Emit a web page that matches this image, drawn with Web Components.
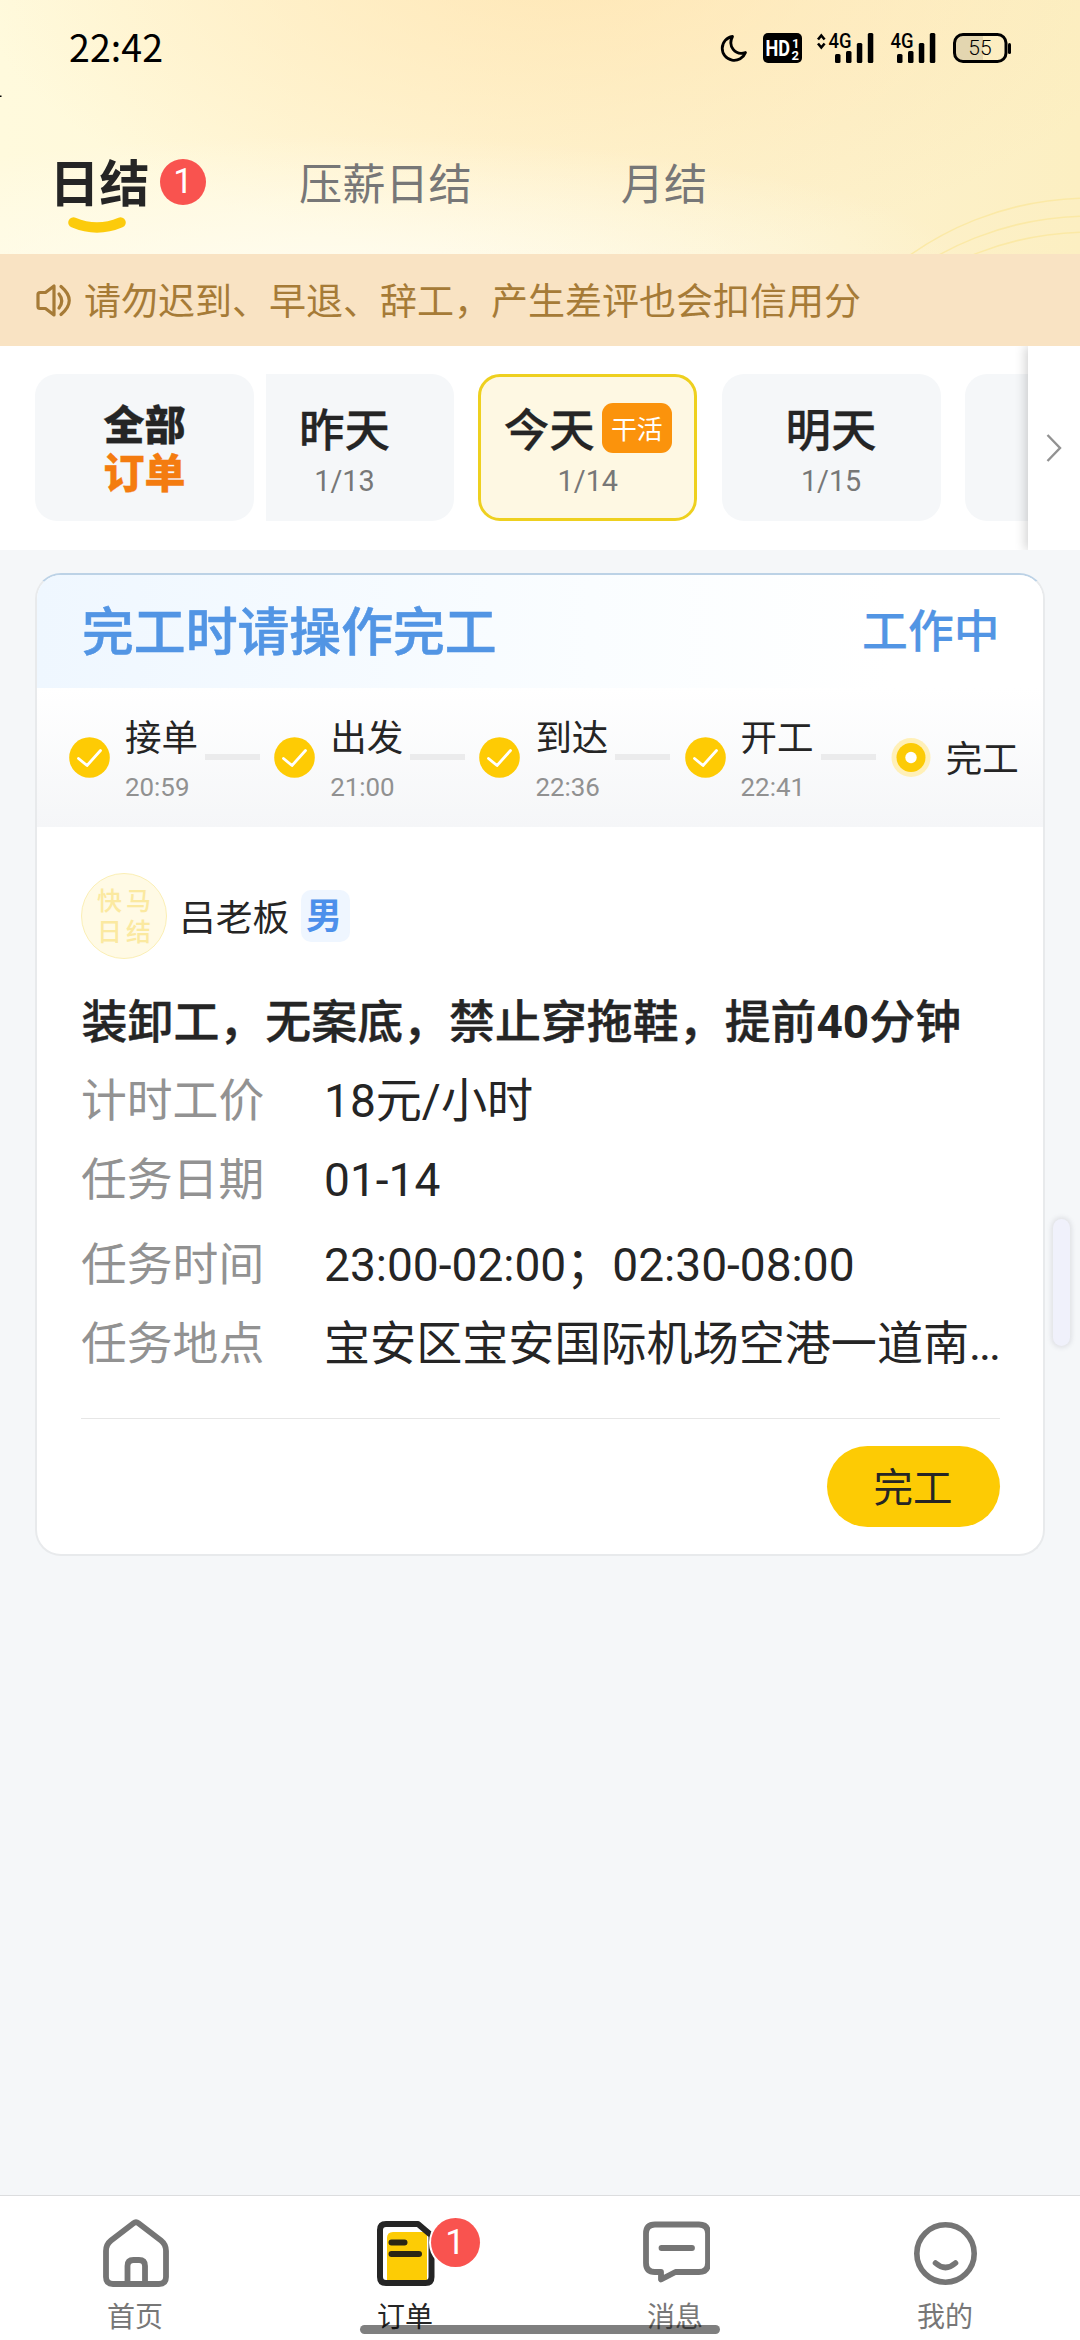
<!DOCTYPE html>
<html lang="zh-CN">
<head>
<meta charset="utf-8">
<title>订单</title>
<style>
html,body{margin:0;padding:0}
body{width:1080px;height:2340px;overflow:hidden;background:#f5f7f9;color:#252525;font-family:Roboto,"Noto Sans CJK SC",sans-serif;-webkit-font-smoothing:antialiased}
</style>
</head>
<body>
<order-page></order-page>
<script>
function define(name, css, html) {
  const t = document.createElement('template');
  t.innerHTML = '<style>*{box-sizing:border-box}:host{box-sizing:border-box}' + css + '</style>' + html;
  customElements.define(name, class extends HTMLElement {
    constructor() {
      super();
      this.attachShadow({ mode: 'open' }).appendChild(t.content.cloneNode(true));
    }
  });
}

define('count-badge', `
:host{display:flex;align-items:center;justify-content:center;width:46px;height:46px;border-radius:50%;background:#f9534f;color:#fff;font-size:35px;line-height:46px;flex:none}
`, `<slot></slot>`);

define('status-bar', `
:host{display:flex;align-items:flex-start;height:96px;padding:24px 68px 0 69px;color:#000}
.time{font:37.5px/44px "Noto Sans CJK SC",sans-serif;letter-spacing:.1px}
.icons{margin-left:auto;display:flex}
svg{display:block;overflow:visible}
text{font-family:Roboto,sans-serif}
`, `<div class="time">22:42</div>
<div class="icons"><svg width="291" height="44" viewBox="721 24 291 44">
<path d="M732.5 36.5A12 12 0 1 0 745.5 52.500C735 56 727.5 46 732.5 36.5Z" fill="none" stroke="#000" stroke-width="2.8" stroke-linejoin="round"/>
<rect x="763" y="33" width="39" height="30" rx="5"/>
<text x="765.5" y="55.500" font-size="22" font-weight="700" fill="#fff" textLength="24.500" lengthAdjust="spacingAndGlyphs">HD</text>
<text x="792" y="47.500" font-size="13" font-weight="700" fill="#fff">1</text>
<text x="791.500" y="59.500" font-size="13" font-weight="700" fill="#fff">2</text>
<path d="M818 39.5L821.3 35.5L824.600 39.5M818 43.500L821.300 47.500L824.600 43.500" fill="none" stroke="#000" stroke-width="2.6"/>
<text x="828.5" y="48" font-size="20" font-weight="500" textLength="23" lengthAdjust="spacingAndGlyphs">4G</text>
<g><rect x="835" y="54" width="5.500" height="9" rx="1.500"/><rect x="846" y="51" width="5.500" height="12" rx="1.500"/><rect x="856.800" y="43" width="5.500" height="20" rx="1.500"/><rect x="867.800" y="33" width="5.500" height="30" rx="1.500"/></g>
<text x="890.5" y="48" font-size="20" font-weight="500" textLength="23" lengthAdjust="spacingAndGlyphs">4G</text>
<g transform="translate(62 0)"><rect x="835" y="54" width="5.500" height="9" rx="1.500"/><rect x="846" y="51" width="5.500" height="12" rx="1.500"/><rect x="856.800" y="43" width="5.500" height="20" rx="1.500"/><rect x="867.800" y="33" width="5.500" height="30" rx="1.500"/></g>
<path d="M962 36H983V60H962A7 7 0 0 1 955 53V43A7 7 0 0 1 962 36Z" fill="#e3d6b0"/>
<rect x="954.500" y="34.500" width="51.500" height="27" rx="8.500" fill="none" stroke="#000" stroke-width="3"/>
<rect x="1008" y="43" width="3" height="11" rx="1.500"/>
<text x="980" y="55.300" font-size="21" font-weight="300" text-anchor="middle">55</text>
</svg></div>`);

define('pay-tab', `
:host{display:flex;flex-direction:column;font-size:43.200px;color:#777;flex:none}
.row{display:flex;align-items:center;height:64px;line-height:64px;white-space:nowrap;padding-top:2px}
svg{display:none;width:60px;height:18px;margin-left:17px}
:host([active]){color:#252525;font-size:50px;font-weight:700}
:host([active]) svg{display:block}
:host([active]) .row{padding-top:0}
::slotted(count-badge){margin:-6px 0 0 10.500px;font-weight:400}
`, `<div class="row"><slot></slot><slot name="badge"></slot></div>
<svg viewBox="0 0 60 18"><path d="M6.500 5.500Q30 15.500 53.500 5.500" fill="none" stroke="#fccb0c" stroke-width="10.500" stroke-linecap="round"/></svg>`);

define('page-header', `
:host{display:block;height:254px;overflow:hidden;background:radial-gradient(ellipse 660px 150px at 330px 285px,rgba(255,253,242,.95),rgba(255,253,242,0)),radial-gradient(ellipse 600px 300px at 570px -40px,rgba(255,228,176,.8),rgba(255,236,200,0)),linear-gradient(90deg,#fffadd 0,#fff6d6 40%,#fdf1cb 78%,#fcefc2 100%)}
.wrap{display:grid}
.wrap>*{grid-area:1/1}
.arcs{display:block}
.tabs{display:flex;align-items:flex-start;padding:57px 0 0 49.500px}
.t2{margin-left:93px}.t3{margin-left:149px}
`, `<div class="wrap"><svg class="arcs" width="1080" height="254" viewBox="0 0 1080 254"><g fill="none" stroke="#fbe9a6" stroke-width="1.500"><circle cx="1090" cy="510" r="312"/><circle cx="1090" cy="528" r="312"/><circle cx="1090" cy="544" r="312"/></g><rect x="0" y="95.500" width="1.500" height="1.500"/></svg>
<div><status-bar></status-bar>
<div class="tabs"><pay-tab active>日结<count-badge slot="badge">1</count-badge></pay-tab><pay-tab class="t2">压薪日结</pay-tab><pay-tab class="t3">月结</pay-tab></div></div></div>`);

define('notice-bar', `
:host{display:flex;align-items:center;height:92px;padding-left:35px;background:#f9e3c3;color:#a67b37;font-size:37px;line-height:92px;white-space:nowrap}
svg{display:block;flex:none;margin-right:11px}
span{margin-top:5px}
`, `<svg width="38" height="36" viewBox="35 282 38 36" fill="none" stroke="#a67b37" stroke-width="3.200" stroke-linecap="round" stroke-linejoin="round"><path d="M54 286V315L45.500 308.500H40Q38 308.500 38 306.500V294.500Q38 292.500 40 292.500H45.500Z"/><path d="M59 294Q64.500 301 59 308M61 286.500Q77.500 300.500 61 314.500"/></svg><span><slot></slot></span>`);

define('day-cell', `
:host{display:flex;flex-direction:column;align-items:center;width:219px;height:147px;border-radius:22px;background:#f5f7f9;flex:none;padding-top:28px}
:host([selected]){background:#fef8e3;border:3px solid #eed01f;padding-top:25px}
.day{display:flex;align-items:center;height:60px;font-size:45.500px;font-weight:500;line-height:60px;white-space:nowrap;-webkit-text-stroke:.3px currentColor}
.date{font-size:28.800px;line-height:36px;color:#777;margin-top:1px}
::slotted([slot=tag]){margin:0 0 8px 7px;width:70px;height:50px;border-radius:11px;background:#fb930c;color:#fff;font-size:25.900px;line-height:54px;text-align:center;font-weight:400;-webkit-text-stroke:0}
`, `<div class="day"><slot></slot><slot name="tag"></slot></div><div class="date"><slot name="date"></slot></div>`);

define('all-orders', `
:host{display:flex;flex-direction:column;align-items:center;justify-content:center;width:219px;height:147px;border-radius:22px;background:#f5f7f9;flex:none;font-size:41px;font-weight:900;line-height:48px;color:#252525;padding-top:5px;-webkit-text-stroke:.3px currentColor}
.o{color:#f47c10;-webkit-text-stroke-color:#f47c10}
`, `<div>全部</div><div class="o">订单</div>`);

define('date-strip', `
:host{display:flex;height:204px;background:#fff;padding:28px 0 0 35px}
.days{margin-left:12px;width:762px;height:147px;overflow:hidden;display:flex;justify-content:flex-start;gap:24.300px}
.days>:first-child{margin-left:-31px}
.next{display:flex;align-items:center;justify-content:center;margin-top:-28px;width:52px;height:204px;background:#fff;box-shadow:-3px 0 10px rgba(0,0,0,.17);clip-path:inset(0 0 0 -20px)}
`, `<all-orders></all-orders>
<div class="days">
<day-cell>昨天<span slot="date">1/13</span></day-cell>
<day-cell selected>今天<span slot="tag">干活</span><span slot="date">1/14</span></day-cell>
<day-cell>明天<span slot="date">1/15</span></day-cell>
<day-cell></day-cell>
</div>
<div class="next"><svg width="20" height="32" viewBox="0 0 20 32"><path d="M3.500 3L16 16L3.500 29" fill="none" stroke="#929292" stroke-width="2.400"/></svg></div>`);

define('step-item', `
:host{display:flex;align-items:center;width:205.200px;height:139px;flex:none}
svg{display:block;flex:none}
.now{display:none}
:host([current]) .now{display:block}
:host([current]) .done{display:none}
.text{display:flex;flex-direction:column;justify-content:center;width:80px;margin-left:15px;padding-top:11px;white-space:nowrap}
.label{font-size:36.500px;line-height:48px}
.time{font-size:25.900px;line-height:48px;color:#919191}
.line{width:55px;height:6px;background:#ebebec;margin-bottom:1px}
:host([current]) .line,:host([current]) .time{display:none}
:host([current]) .text{padding-top:4px}
`, `<svg class="done" width="41" height="41" viewBox="0 0 41 41"><circle cx="20.500" cy="20.500" r="20.300" fill="#fecb04"/><path d="M9.500 21.500L18 28.500L31.500 13.500" fill="none" stroke="#fff" stroke-width="2.800" stroke-linecap="round" stroke-linejoin="round"/></svg>
<svg class="now" width="41" height="41" viewBox="0 0 41 41"><circle cx="21" cy="20.500" r="19.500" fill="#fff0b8"/><circle cx="21" cy="20.500" r="14.500" fill="#fccb06"/><circle cx="21" cy="20.500" r="5.700" fill="#fff"/></svg>
<div class="text"><div class="label"><slot></slot></div><div class="time"><slot name="time"></slot></div></div><div class="line"></div>`);

define('info-row', `
:host{display:flex;align-items:center;height:79px;font-size:46.080px;line-height:79px}
.k{width:243px;color:#929292;flex:none;font-size:45.800px}
.v{flex:1;min-width:0;white-space:nowrap}
`, `<div class="k"><slot name="label"></slot></div><div class="v"><slot></slot></div>`);

define('boss-avatar', `
:host{display:grid;grid-template-columns:29px 29px;grid-auto-rows:31px;place-content:center;width:86px;height:86px;border-radius:50%;border:1px solid #fbefb5;background:#fffae5;color:#fbe9a0;font-size:25px;line-height:33px;font-weight:500;text-align:center}
`, `<span>快</span><span>马</span><span>日</span><span>结</span>`);

define('order-card', `
:host{display:block;margin:23px 35.500px 0 35px;height:983px;border:2px solid #e8eaec;border-top-color:#bcd2e6;border-radius:26px;background:#fff;overflow:hidden;font-weight:400}
.head{display:flex;align-items:center;justify-content:space-between;height:113px;padding:0 43px 0 45px;background:linear-gradient(90deg,#eff7ff,#fafdff 55%,#fff 85%);color:#5295e4;font-weight:500;white-space:nowrap}
.head .a{font-size:51.840px;line-height:70px;padding-top:4px;-webkit-text-stroke:.6px currentColor}
.head .b{font-size:45.800px;line-height:70px;padding-top:2px;-webkit-text-stroke:.2px currentColor}
.steps{display:flex;height:139px;padding-left:32px;background:linear-gradient(#fff,#f5f6f8);overflow:hidden}
.body{padding:46px 43px 0 44px}
.boss{display:flex;align-items:center;height:86px;font-size:36.800px;line-height:60px}
.name{margin-left:12px;padding-top:6px}
.sex{margin-left:11.500px;width:49px;height:52px;border-radius:10px;background:#eff6ff;color:#4c90eb;font-weight:700;font-size:36px;line-height:54px;text-align:center;padding-right:3px}
.title{margin-top:24px;height:79px;line-height:79px;font-size:45.950px;font-weight:500;white-space:nowrap;padding-left:.5px;-webkit-text-stroke:.4px currentColor}
.title b{font-weight:700;-webkit-text-stroke:0}
.gap{margin-top:6px}
.foot{display:flex;justify-content:flex-end;margin-top:34px;border-top:1px solid #e6e6e6;padding-top:27px}
.btn{width:173px;height:81px;border-radius:41px;background:#fdcb04;font-size:39.500px;line-height:85px;text-align:center}
`, `<div class="head"><div class="a">完工时请操作完工</div><div class="b">工作中</div></div>
<div class="steps">
<step-item>接单<span slot="time">20:59</span></step-item>
<step-item>出发<span slot="time">21:00</span></step-item>
<step-item>到达<span slot="time">22:36</span></step-item>
<step-item>开工<span slot="time">22:41</span></step-item>
<step-item current>完工</step-item>
</div>
<div class="body">
<div class="boss"><boss-avatar></boss-avatar><span class="name">吕老板</span><span class="sex">男</span></div>
<div class="title">装卸工，无案底，禁止穿拖鞋，提前<b>40</b>分钟</div>
<info-row><span slot="label">计时工价</span>18元/小时</info-row>
<info-row><span slot="label">任务日期</span>01-14</info-row>
<info-row class="gap"><span slot="label">任务时间</span>23:00-02:00；02:30-08:00</info-row>
<info-row><span slot="label">任务地点</span>宝安区宝安国际机场空港一道南<span style="letter-spacing:-2.200px">...</span></info-row>
<div class="foot"><div class="btn">完工</div></div>
</div>`);

define('nav-item', `
:host{display:flex;flex-direction:column;align-items:center;width:270px;font-size:28px;line-height:40px;color:#777}
:host([active]){color:#252525}
.icon{height:80px;position:relative}
::slotted(svg){display:block}
::slotted(count-badge){position:absolute;left:60.500px;top:0;width:49px!important;height:49px!important;box-shadow:0 0 0 2px #fff}
`, `<div class="icon"><slot name="icon"></slot><slot name="badge"></slot></div><div class="l"><slot></slot></div>`);

define('nav-bar', `
:host{display:flex;height:145px;border-top:1px solid #dcdddf;background:#fff;padding-top:22px}
`, `<nav-item><svg slot="icon" width="70" height="76" viewBox="0 0 70 76" fill="none" stroke="#757575" stroke-width="5.800" stroke-linejoin="round"><path d="M33.500 5.300Q36 3.300 38.500 5.300L61 22.500Q66 26.500 66 33V59Q66 66 59 66H13Q6 66 6 59V33Q6 26.500 11 22.500Z"/><path d="M27.500 65V48Q27.500 42 33.500 42H39Q45 42 45 48V65"/></svg>首页</nav-item>
<nav-item active><svg slot="icon" width="70" height="76" viewBox="0 0 70 76"><path d="M17 20Q17 14 23 14H57V64H17Z" fill="#fdcc05"/><path d="M48 6L61.500 17.500V59Q61.500 65 55.500 65H16Q10 65 10 59V12Q10 6 16 6Z" fill="none" stroke="#252525" stroke-width="6" stroke-linejoin="round"/><path d="M21.500 24.500H34.500M21.500 36H49" stroke="#2b2614" stroke-width="6" stroke-linecap="round"/></svg><count-badge slot="badge">1</count-badge>订单</nav-item>
<nav-item><svg slot="icon" width="70" height="76" viewBox="0 0 70 76" fill="none" stroke="#757575" stroke-width="5.800" stroke-linecap="round" stroke-linejoin="round"><path d="M15 6.500H59Q68 6.500 68 15.500V45Q68 54 59 54H35.500L21 61.500V54H15Q6 54 6 45V15.500Q6 6.500 15 6.500Z"/><path d="M21.500 30H52"/></svg>消息</nav-item>
<nav-item><svg slot="icon" width="70" height="76" viewBox="0 0 70 76" fill="none" stroke="#757575" stroke-width="5.600" stroke-linecap="round"><circle cx="35.500" cy="35.500" r="28.700"/><path d="M25.500 45Q35.500 54 45.500 45"/></svg>我的</nav-item>`);

define('order-page', `
:host{display:flex;flex-direction:column;width:1080px;height:2340px;position:relative;overflow:hidden;background:#f5f7f9}
nav-bar{margin-top:auto}
.handle{position:absolute;left:1053px;top:1219px;width:17px;height:127px;border-radius:9px;background:#f0f1fb;box-shadow:0 0 4px 2px rgba(120,120,130,.16)}
.home{position:absolute;left:360px;top:2325px;width:360px;height:9px;border-radius:5px;background:rgba(0,0,0,.5)}
`, `<page-header></page-header>
<notice-bar>请勿迟到、早退、辞工，产生差评也会扣信用分</notice-bar>
<date-strip></date-strip>
<order-card></order-card>
<nav-bar></nav-bar>
<div class="handle"></div><div class="home"></div>`);
</script>
</body>
</html>
